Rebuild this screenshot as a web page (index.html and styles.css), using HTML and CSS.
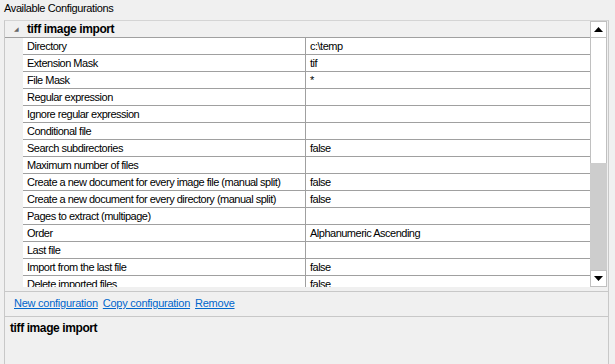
FILE: index.html
```html
<!DOCTYPE html>
<html lang="en">
<head>
  <meta charset="UTF-8">
  <title>Available Configurations</title>
  <link rel="stylesheet" href="styles.css">
</head>
<body>
<div class="caption">Available Configurations</div>

<div class="panel">
  <div class="grid">
    <div class="viewport">
      <div class="category">
        <span class="toggle">&#9698;</span>
        <span class="category-name">tiff image import</span>
      </div>
      <div class="row"><div class="gutter"></div><div class="name">Directory</div><div class="value">c:\temp</div></div>
      <div class="row"><div class="gutter"></div><div class="name">Extension Mask</div><div class="value">tif</div></div>
      <div class="row"><div class="gutter"></div><div class="name">File Mask</div><div class="value">*</div></div>
      <div class="row"><div class="gutter"></div><div class="name">Regular expression</div><div class="value"></div></div>
      <div class="row"><div class="gutter"></div><div class="name">Ignore regular expression</div><div class="value"></div></div>
      <div class="row"><div class="gutter"></div><div class="name">Conditional file</div><div class="value"></div></div>
      <div class="row"><div class="gutter"></div><div class="name">Search subdirectories</div><div class="value">false</div></div>
      <div class="row"><div class="gutter"></div><div class="name">Maximum number of files</div><div class="value"></div></div>
      <div class="row"><div class="gutter"></div><div class="name">Create a new document for every image file (manual split)</div><div class="value">false</div></div>
      <div class="row"><div class="gutter"></div><div class="name">Create a new document for every directory (manual split)</div><div class="value">false</div></div>
      <div class="row"><div class="gutter"></div><div class="name">Pages to extract (multipage)</div><div class="value"></div></div>
      <div class="row"><div class="gutter"></div><div class="name">Order</div><div class="value">Alphanumeric Ascending</div></div>
      <div class="row"><div class="gutter"></div><div class="name">Last file</div><div class="value"></div></div>
      <div class="row"><div class="gutter"></div><div class="name">Import from the last file</div><div class="value">false</div></div>
      <div class="row"><div class="gutter"></div><div class="name">Delete imported files</div><div class="value">false</div></div>
    </div>
    <div class="scrollbar">
      <div class="arrow">
        <svg width="9" height="5" viewBox="0 0 9 5"><path d="M0 5 L4.5 0 L9 5 Z" fill="#000"/></svg>
      </div>
      <div class="thumb"></div>
      <div class="track"></div>
      <div class="arrow">
        <svg width="9" height="5" viewBox="0 0 9 5"><path d="M0 0 L9 0 L4.5 5 Z" fill="#000"/></svg>
      </div>
    </div>
  </div>

  <div class="commands">
    <a href="#">New configuration</a>
    <a href="#">Copy configuration</a>
    <a href="#">Remove</a>
  </div>

  <div class="description">
    <div class="description-title">tiff image import</div>
  </div>
</div>
</body>
</html>
```

FILE: styles.css
```css
body {
  margin: 0;
  background: #f0f0f0;
  font-family: "Liberation Sans", Arial, sans-serif;
  font-size: 11px;
  letter-spacing: -0.38px;
  color: #000;
  height: 364px;
  overflow: hidden;
}
.caption {
  height: 20px;
  line-height: 16px;
  padding-left: 4px;
}
.panel {
  margin-left: 4px;
  width: 605px;
  height: 344px;
  border-left: 1px solid #c8c8c8;
  border-right: 1px solid #c8c8c8;
  border-top: 1px solid #d4d4d4;
  box-sizing: border-box;
  display: flex;
  flex-direction: column;
}
.grid {
  display: flex;
  height: 266px;
  padding-right: 1px;
}
.viewport {
  flex: 1;
  overflow: hidden;
  background: #fff;
}
.category {
  height: 16px;
  line-height: 16px;
  background: #f0f0f0;
  border-bottom: 1px solid #a0a0a0;
  display: flex;
}
.toggle {
  width: 22px;
  font-size: 6px;
  color: #666;
  text-align: center;
}
.category-name {
  font-weight: bold;
  font-size: 12px;
  letter-spacing: -0.4px;
}
.row {
  display: flex;
  height: 17px;
  line-height: 16px;
  letter-spacing: -0.5px;
}
.gutter {
  width: 18px;
  background: #f0f0f0;
  flex: none;
}
.name {
  width: 278px;
  flex: none;
  padding-left: 4px;
  border-bottom: 1px solid #a0a0a0;
  border-right: 1px solid #a0a0a0;
  white-space: nowrap;
  overflow: hidden;
}
.value {
  flex: 1;
  padding-left: 4px;
  border-bottom: 1px solid #a0a0a0;
  white-space: nowrap;
}
.scrollbar {
  width: 17px;
  display: flex;
  flex-direction: column;
  background: #fff;
}
.arrow {
  border: 1px solid #c0c0c0;
  box-sizing: border-box;
  height: 17px;
  display: flex;
  align-items: center;
  justify-content: center;
  background: #fff;
}
.thumb {
  height: 125px;
  border-left: 1px solid #c0c0c0;
  border-right: 1px solid #c0c0c0;
  background: #fff;
}
.track {
  flex: 1;
  background: #cdcdcd;
}
.commands {
  margin-top: 4px;
  border-top: 1px solid #c8c8c8;
  height: 24px;
  line-height: 22px;
  padding-left: 9px;
  display: flex;
  gap: 5px;
}
.commands a {
  color: #0066cc;
  text-decoration: underline;
  letter-spacing: -0.25px;
}
.description {
  border-top: 1px solid #c8c8c8;
  flex: 1;
  padding: 4px 5px;
}
.description-title {
  font-weight: bold;
  font-size: 12px;
  letter-spacing: -0.4px;
}
```
